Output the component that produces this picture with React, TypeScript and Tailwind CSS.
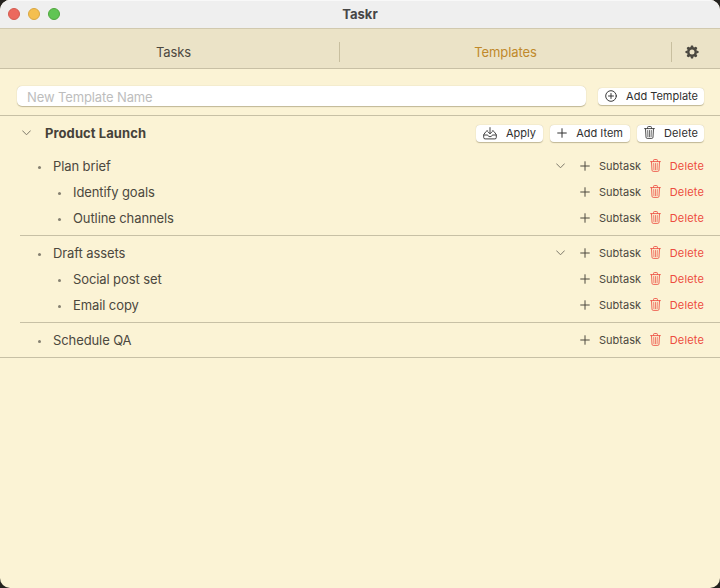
import React from "react";

type Item = { title: string; children?: string[] };

const items: Item[] = [
  { title: "Plan brief", children: ["Identify goals", "Outline channels"] },
  { title: "Draft assets", children: ["Social post set", "Email copy"] },
  { title: "Schedule QA" },
];

function Chevron() {
  return (
    <svg width="9" height="6" viewBox="0 0 9 6" fill="none" stroke="#7e796b" strokeWidth="1" strokeLinecap="round" strokeLinejoin="round" className="shrink-0">
      <path d="M0.6 0.8 4.5 4.8 8.4 0.8" />
    </svg>
  );
}

function Plus() {
  return (
    <svg width="10" height="10" viewBox="0 0 10 10" fill="none" stroke="currentColor" strokeWidth="1" strokeLinecap="round" className="shrink-0">
      <path d="M5 0.7v8.6M0.7 5h8.6" />
    </svg>
  );
}

function Trash() {
  return (
    <svg width="11" height="13" viewBox="0 0 11 13" fill="none" stroke="currentColor" strokeWidth="0.85" strokeLinecap="round" strokeLinejoin="round" className="mb-px shrink-0">
      <path d="M0.6 2.6h9.8M3.6 2.4V1.3q0-.8.8-.8h2.2q.8 0 .8.8v1.1M1.5 2.8l.5 8.4q.1 1.2 1.2 1.2h4.6q1.1 0 1.2-1.2l.5-8.4" />
      <path d="M3.7 4.5l.2 6.2M5.5 4.5v6.2M7.3 4.5l-.2 6.2" strokeWidth="0.7" />
    </svg>
  );
}

function Tray() {
  return (
    <svg width="14" height="13" viewBox="0 0 14 13" fill="none" stroke="currentColor" strokeWidth="0.9" strokeLinecap="round" strokeLinejoin="round" className="shrink-0">
      <path d="M4.7 3.9h-.5q-.8 0-1.2.6L1.1 7.1q-.4.5-.4 1v2.4q0 1.4 1.4 1.4h9.8q1.4 0 1.4-1.4V8.1q0-.5-.4-1L11 4.5q-.4-.6-1.2-.6h-.5" />
      <path d="M.8 8h3.6q.5 0 .6.5.3 1.2 2 1.2t2-1.2q.1-.5.6-.5h3.6M7 .6v6M5.1 4.9 7 6.8l1.9-1.9" />
    </svg>
  );
}

function PlusCircle() {
  return (
    <svg width="12" height="12" viewBox="0 0 12 12" fill="none" stroke="currentColor" strokeWidth="0.95" strokeLinecap="round" className="shrink-0">
      <circle cx="6" cy="6" r="5.3" />
      <path d="M6 3.5v5M3.5 6h5" />
    </svg>
  );
}

function Gear() {
  return (
    <svg width="14" height="14" viewBox="-7 -7 14 14" fill="#4b4840" className="shrink-0">
      {[0, 45, 90, 135, 180, 225, 270, 315].map((angle) => (
        <path key={angle} d="M-1.6-4.3-1.1-6.2q.1-.4.5-.4H.6q.4 0 .5.4l.5 1.9Z" transform={`rotate(${angle})`} />
      ))}
      <circle r="3.7" fill="none" stroke="#4b4840" strokeWidth="2.4" />
    </svg>
  );
}

function Button({ icon, label, className }: { icon: React.ReactNode; label: string; className: string }) {
  return (
    <button className={`flex h-[17px] shrink-0 items-center justify-between rounded-[4px] bg-white text-[11px] leading-[17px] text-[#303030] shadow-[0_0.5px_1px_rgba(80,70,30,0.35)] ${className}`}>
      {icon}
      <span className="whitespace-nowrap">{label}</span>
    </button>
  );
}

function Row({ title, nested, expandable }: { title: string; nested?: boolean; expandable?: boolean }) {
  return (
    <div className={`flex h-[26px] items-center pr-4 ${nested ? "pl-[58px]" : "pl-[38px]"}`}>
      <span className="mt-[2px] size-[3px] shrink-0 rounded-full bg-[#858071]" />
      <span className="ml-3 flex-1 text-[13px] leading-[18px] tracking-[-0.1px] text-[#4c483e]">{title}</span>
      {expandable && <Chevron />}
      <div className="ml-[15px] flex w-[61px] items-center justify-between text-[11px] text-[#4c483e]">
        <Plus />
        <span>Subtask</span>
      </div>
      <div className="ml-[9px] flex w-[54px] items-center justify-between text-[11px] text-[#ed4d40]">
        <Trash />
        <span className="tracking-[0.15px]">Delete</span>
      </div>
    </div>
  );
}

export default function App() {
  return (
    <div className="h-[588px] w-[720px] bg-[#24221f] font-['Inter',sans-serif]">
      <main className="flex h-full flex-col overflow-hidden rounded-[10px] bg-[#fbf3d5]">
        <header className="grid h-7 shrink-0 grid-cols-[1fr_auto_1fr] items-center bg-[#efefef] shadow-[inset_0_1px_0_#f8f8f8]">
          <div className="flex gap-2 pl-2">
            <span className="size-3 rounded-full border-[0.5px] border-[#d35c50] bg-[#ec695e]" />
            <span className="size-3 rounded-full border-[0.5px] border-[#d9a742] bg-[#f4bf4f]" />
            <span className="size-3 rounded-full border-[0.5px] border-[#50a73e] bg-[#61c554]" />
          </div>
          <h1 className="text-[13px] font-bold leading-7 text-[#464646]">Taskr</h1>
        </header>
        <nav className="flex h-[41px] shrink-0 items-center border-y border-t-[#d1c9ae] border-b-[#c8c0a5] bg-[#ebe3c7] pt-[7px] text-[13px]">
          <div className="w-[339px] pl-2 pt-[2px] text-center tracking-[-0.1px] text-[#4c483e]">Tasks</div>
          <div className="h-5 w-px bg-[#c8bf9f]" />
          <div className="w-[331px] pt-[2px] text-center tracking-[-0.1px] text-[#c0892b]">Templates</div>
          <div className="h-5 w-px bg-[#c8bf9f]" />
          <div className="flex flex-1 justify-center pr-2"><Gear /></div>
        </nav>
        <div className="flex h-[47px] shrink-0 items-center gap-3 border-b border-[#c7c0a5] pl-[17px] pr-4 pt-[8px]">
          <input placeholder="New Template Name" className="h-5 min-w-0 flex-1 rounded-[5px] bg-white px-[10px] pt-px text-[13px] tracking-[-0.12px] shadow-[0_0.5px_1px_rgba(80,70,30,0.35)] outline-none placeholder:text-[#bdbdbd]" />
          <Button icon={<PlusCircle />} label="Add Template" className="w-[106px] pl-[7px] pr-[6px]" />
        </div>
        <section className="border-b border-[#c7c0a5]">
          <div className="flex h-[34px] items-center pl-[22px] pr-4">
            <Chevron />
            <h2 className="ml-[14px] flex-1 pt-[2px] text-[13px] font-bold tracking-[0.08px] text-[#464239]">Product Launch</h2>
            <div className="flex gap-[7px]">
              <Button icon={<Tray />} label="Apply" className="w-[67px] pl-[7px] pr-[7px]" />
              <Button icon={<Plus />} label="Add Item" className="w-[80px] pl-[7px] pr-[7px]" />
              <Button icon={<Trash />} label="Delete" className="w-[67px] pl-[7px] pr-[6px] tracking-[0.1px]" />
            </div>
          </div>
          <div className="-mt-px">
            {items.map((item, index) => (
              <div key={item.title}>
                {index > 0 && <div className="ml-5 h-px bg-[#c7c0a5]" />}
                <div className="py-1">
                  <Row title={item.title} expandable={!!item.children} />
                  {item.children?.map((child) => <Row key={child} title={child} nested />)}
                </div>
              </div>
            ))}
          </div>
        </section>
      </main>
    </div>
  );
}
